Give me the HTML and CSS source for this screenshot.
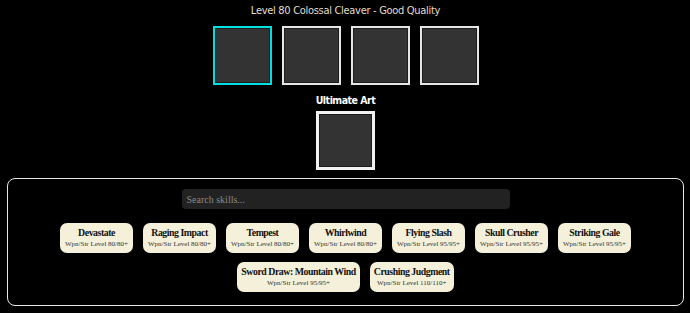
FILE: index.html
```html
<!DOCTYPE html>
<html lang="en">
<head>
  <meta charset="UTF-8">
  <title>Weapon Skills</title>
  <link rel="stylesheet" href="styles.css">
</head>
<body>
  <h1 class="title">Level 80 Colossal Cleaver - Good Quality</h1>
  <div class="slots">
    <div class="slot active"></div>
    <div class="slot"></div>
    <div class="slot"></div>
    <div class="slot"></div>
  </div>

  <h2 class="ult-label">Ultimate Art</h2>
  <div class="slots">
    <div class="slot ult"></div>
  </div>

  <div class="panel">
    <input class="search" type="text" placeholder="Search skills...">
    <div class="skills">
      <div class="skill"><b>Devastate</b><span>Wpn/Str Level 80/80+</span></div>
      <div class="skill"><b>Raging Impact</b><span>Wpn/Str Level 80/80+</span></div>
      <div class="skill"><b>Tempest</b><span>Wpn/Str Level 80/80+</span></div>
      <div class="skill"><b>Whirlwind</b><span>Wpn/Str Level 80/80+</span></div>
      <div class="skill"><b>Flying Slash</b><span>Wpn/Str Level 95/95+</span></div>
      <div class="skill"><b>Skull Crusher</b><span>Wpn/Str Level 95/95+</span></div>
      <div class="skill"><b>Striking Gale</b><span>Wpn/Str Level 95/95+</span></div>
      <div class="skill"><b>Sword Draw: Mountain Wind</b><span>Wpn/Str Level 95/95+</span></div>
      <div class="skill"><b>Crushing Judgment</b><span>Wpn/Str Level 110/110+</span></div>
    </div>
  </div>
</body>
</html>
```

FILE: styles.css
```css
body {
  margin: 0;
  padding: 0 6px 0 7px;
  background: #000;
  color: #e2ddcc;
  font-family: "DejaVu Sans Condensed", "DejaVu Sans", sans-serif;
}
.title {
  margin: 0;
  padding-top: 3px;
  height: 23px;
  font-size: 11px;
  letter-spacing: -0.3px;
  font-weight: normal;
  text-align: center;
  line-height: 16px;
}
.slots {
  display: flex;
  justify-content: center;
  gap: 10px;
}
.slot {
  width: 55px;
  height: 55px;
  border: 2px solid #e6e6e6;
  background: #333;
  box-shadow: inset 0 0 0 1px #1e1e1e;
}
.slot.active {
  border-color: #00e0e0;
}
.slot.ult {
  width: 53px;
  height: 53px;
  border: 3px solid #f2f2f2;
}
.ult-label {
  margin: 0;
  padding-top: 8px;
  height: 18px;
  font-size: 10.5px;
  letter-spacing: -0.5px;
  color: #fff;
  text-align: center;
  line-height: 14px;
}
.panel {
  margin-top: 8px;
  border: 1px solid #e8e8e8;
  border-radius: 8px;
  padding: 10px 10px 13px;
  display: flex;
  flex-direction: column;
  align-items: center;
}
.search {
  width: 328px;
  height: 20px;
  box-sizing: border-box;
  border: none;
  border-radius: 4px;
  background: #222;
  color: #ccc;
  padding: 0 5px;
  font-family: "Liberation Serif", serif;
  font-size: 10px;
}
.search::placeholder {
  color: #8a8a8a;
}
.skills {
  margin-top: 14px;
  display: flex;
  flex-wrap: wrap;
  justify-content: center;
  gap: 9px 10px;
  max-width: 620px;
}
.skill {
  background: #f4f0d9;
  border-radius: 7px;
  padding: 4px 4px;
  min-width: 65px;
  display: flex;
  flex-direction: column;
  align-items: center;
  color: #111;
  font-family: "Liberation Serif", serif;
}
.skill b {
  font-size: 9.8px;
  letter-spacing: -0.45px;
  line-height: 12px;
}
.skill span {
  font-size: 7px;
  line-height: 10px;
  color: #333;
}
```
